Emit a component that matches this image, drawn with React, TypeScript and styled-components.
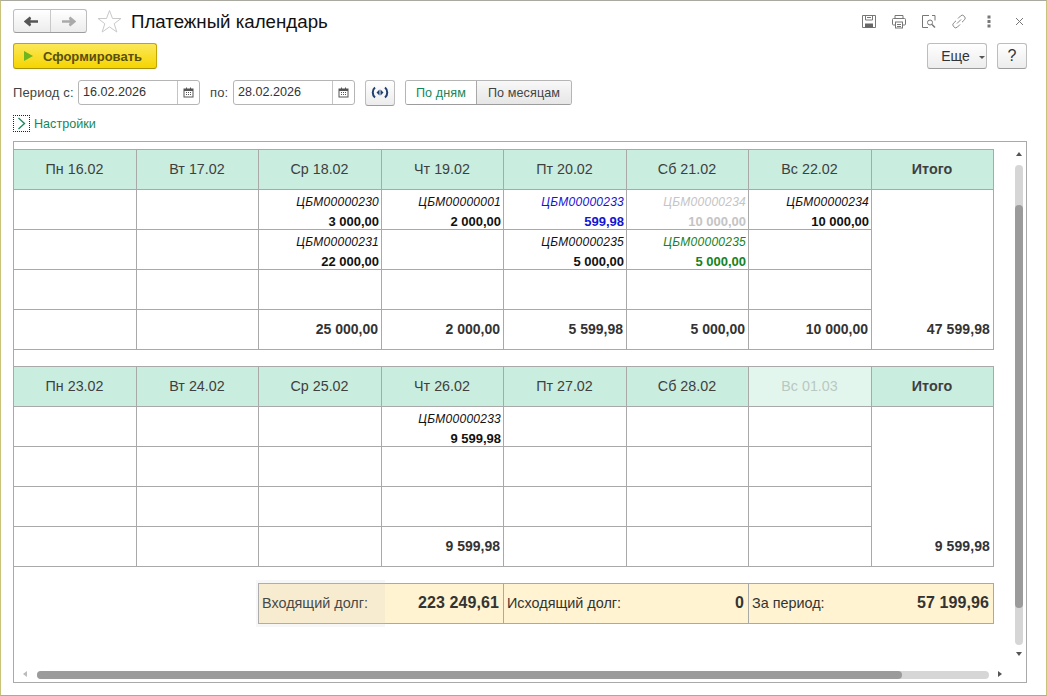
import { Fragment } from 'react';
import styled, { createGlobalStyle } from 'styled-components';

const GlobalStyle = createGlobalStyle`
    html, body {
        margin: 0;
        padding: 0;
        background: #fff;
    }
    body {
        font-family: "Liberation Sans", Arial, sans-serif;
        color: #333;
    }
`

const Window = styled.div`
    width: 1047px;
    height: 696px;
    box-sizing: border-box;
    border: 1px solid #c9c27a;
    border-top-color: #a9a9a0;
    border-bottom-color: #a9a9a0;
    padding: 8px 19px 12px 12px;
    display: flex;
    flex-direction: column;
    overflow: hidden;
`

const TitleRow = styled.div`
    display: flex;
    align-items: center;
    height: 24px;
`

const NavGroup = styled.div`
    display: flex;
    width: 74px;
    height: 24px;
    box-sizing: border-box;
    border: 1px solid #bdbdbd;
    border-bottom-color: #9c9c9c;
    border-radius: 3px;
    background: linear-gradient(#fff, #ececec);
`

const NavButton = styled.div<{ $last?: boolean }>`
    flex: 1;
    display: flex;
    align-items: center;
    justify-content: center;
    border-left: ${(p) => (p.$last ? '1px solid #c8c8c8' : 'none')};
`

const StarWrap = styled.div`
    margin-left: 10px;
    width: 26px;
    height: 24px;
`

const Title = styled.h1`
    margin: 1px 0 0 8px;
    font-size: 18.7px;
    font-weight: normal;
    color: #111;
    flex: 1;
`

const ToolIcons = styled.div`
    display: flex;
    align-items: center;
    margin-right: -7px;
`

const ToolIcon = styled.div`
    width: 30px;
    height: 20px;
    display: flex;
    align-items: center;
    justify-content: center;
`

const CommandRow = styled.div`
    display: flex;
    align-items: center;
    margin-top: 10px;
    height: 26px;
`

const GenerateButton = styled.div`
    width: 144px;
    height: 26px;
    box-sizing: border-box;
    display: flex;
    align-items: center;
    padding-left: 10px;
    gap: 10px;
    border: 1px solid #c4a600;
    border-bottom-color: #a89000;
    border-radius: 3px;
    background: linear-gradient(#fbe85a, #f5d500);
    font-size: 13px;
    font-weight: bold;
    color: #5a4f10;
`

const Spacer = styled.div`
    flex: 1;
`

const PlainButton = styled.div<{ $w: number; $big?: boolean; $pl?: number }>`
    width: ${(p) => p.$w}px;
    height: 26px;
    box-sizing: border-box;
    display: flex;
    align-items: center;
    justify-content: center;
    gap: 9px;
    margin-left: 10px;
    padding-left: ${(p) => p.$pl ?? 0}px;
    border: 1px solid #bdbdbd;
    border-bottom-color: #9c9c9c;
    border-radius: 3px;
    background: linear-gradient(#fff, #ececec);
    font-size: ${(p) => (p.$big ? 16 : 14)}px;
    color: #333;
`

const Caret = styled.span`
    width: 0;
    height: 0;
    margin-top: 2px;
    border-left: 3px solid transparent;
    border-right: 3px solid transparent;
    border-top: 3px solid #555;
`

const PeriodRow = styled.div`
    display: flex;
    align-items: center;
    margin-top: 11px;
    height: 25px;
    font-size: 13px;
    color: #444;
`

const PeriodLabel = styled.span<{ $w: number; $ml?: number }>`
    width: ${(p) => p.$w}px;
    margin-left: ${(p) => p.$ml ?? 0}px;
    letter-spacing: 0.15px;
`

const DateBox = styled.div`
    width: 122px;
    height: 25px;
    box-sizing: border-box;
    display: flex;
    border: 1px solid #b5b5b5;
    border-radius: 3px;
    background: #fff;
    font-size: 12.6px;
    color: #333;
`

const DateValue = styled.div`
    flex: 1;
    padding-left: 4px;
    line-height: 23px;
`

const DateIcon = styled.div`
    width: 21px;
    border-left: 1px solid #c4c4c4;
    display: flex;
    align-items: center;
    justify-content: center;
`

const SyncButton = styled.div`
    width: 30px;
    height: 26px;
    box-sizing: border-box;
    margin-left: 10px;
    display: flex;
    align-items: center;
    justify-content: center;
    border: 1px solid #bdbdbd;
    border-bottom-color: #9c9c9c;
    border-radius: 3px;
    background: linear-gradient(#fff, #ececec);
`

const Segmented = styled.div`
    display: flex;
    height: 25px;
    margin-left: 10px;
    box-sizing: border-box;
    border: 1px solid #b5b5b5;
    border-bottom-color: #9c9c9c;
    border-radius: 3px;
    font-size: 12.6px;
    overflow: hidden;
`

const Segment = styled.div<{ $active?: boolean }>`
    display: flex;
    align-items: center;
    justify-content: center;
    width: ${(p) => (p.$active ? 70 : 94)}px;
    letter-spacing: 0.1px;
    color: ${(p) => (p.$active ? '#14875a' : '#444')};
    background: ${(p) => (p.$active ? '#fff' : 'linear-gradient(#f8f8f8, #e6e6e6)')};
    border-left: ${(p) => (p.$active ? 'none' : '1px solid #a8a8a8')};
`

const SettingsRow = styled.div`
    display: flex;
    align-items: center;
    gap: 4px;
    margin-top: 10px;
    height: 17px;
    font-size: 12.6px;
    color: #14875a;
`

const SettingsToggle = styled.div`
    width: 17px;
    height: 17px;
    box-sizing: border-box;
    border: 1px dotted #222;
    display: flex;
    align-items: center;
    justify-content: center;
`

const Panel = styled.div`
    position: relative;
    margin-top: 9px;
    flex: 1;
    border: 1px solid #a9a9a9;
    padding: 7px 32px 0 0;
    min-height: 0;
`

const CalendarGrid = styled.div`
    display: grid;
    grid-template-columns: 123px 122px 123px 122px 123px 122px 123px 122px;
    grid-auto-rows: 40px;
    border-top: 1px solid #a9a9a9;
    margin-bottom: 16px;
    width: 980px;
`

const HeaderCell = styled.div<{ $total?: boolean; $faded?: boolean }>`
    display: flex;
    align-items: center;
    justify-content: center;
    box-sizing: border-box;
    padding: 0 1px 1px 0;
    border-right: 1px solid #a9a9a9;
    border-bottom: 1px solid #a9a9a9;
    background: ${(p) => (p.$faded ? '#e3f6ee' : '#c9eddf')};
    font-size: 14.3px;
    font-weight: ${(p) => (p.$total ? 'bold' : 'normal')};
    color: ${(p) => (p.$faded ? '#b9c8c1' : '#3f3f3f')};
`

const Cell = styled.div`
    box-sizing: border-box;
    border-right: 1px solid #a9a9a9;
    border-bottom: 1px solid #a9a9a9;
    padding: 3px 2px 0 0;
    text-align: right;
    font-size: 12px;
    line-height: 20px;
`

const DocNumber = styled.div<{ $color?: string }>`
    font-style: italic;
    height: 19px;
    line-height: 18px;
    letter-spacing: 0.25px;
    color: ${(p) => p.$color ?? '#111'};
`

const Amount = styled.div<{ $color?: string }>`
    font-size: 13px;
    font-weight: bold;
    height: 18px;
    line-height: 19px;
    color: ${(p) => p.$color ?? '#111'};
`

const DayTotal = styled.div`
    box-sizing: border-box;
    border-right: 1px solid #a9a9a9;
    border-bottom: 1px solid #a9a9a9;
    padding: 0 3px 12px 0;
    display: flex;
    align-items: flex-end;
    justify-content: flex-end;
    font-size: 14px;
    line-height: 16px;
    font-weight: bold;
    color: #333;
`

const GrandTotal = styled(DayTotal)`
    grid-row: span 4;
    letter-spacing: 0.1px;
`

const Summary = styled.div`
    display: grid;
    grid-template-columns: 245px 245px 244px;
    width: 736px;
    height: 41px;
    margin-left: 244px;
    box-sizing: border-box;
    border: 1px solid #a9a9a9;
    background: #fff3d1;
    position: relative;
`

const SummaryCell = styled.div<{ $last?: boolean }>`
    display: flex;
    align-items: center;
    justify-content: space-between;
    padding: 0 4px 1px 3px;
    border-right: ${(p) => (p.$last ? 'none' : '1px solid #a9a9a9')};
    font-size: 14.4px;
    color: #333;
`

const SummaryValue = styled.span`
    font-size: 16px;
    font-weight: bold;
    letter-spacing: 0.1px;
`

const HoverShade = styled.div`
    position: absolute;
    left: -3px;
    top: -4px;
    width: 129px;
    height: 47px;
    background: rgba(200, 200, 200, 0.14);
    pointer-events: none;
`

const ScrollV = styled.div`
    position: absolute;
    right: 3px;
    top: 23px;
    bottom: 37px;
    width: 8px;
    border-radius: 4px;
    background: #d6d6d6;
`

const ScrollVThumb = styled.div`
    position: absolute;
    left: 0;
    right: 0;
    top: 40px;
    height: 403px;
    border-radius: 4px;
    background: #9b9b9b;
`

const ScrollH = styled.div`
    position: absolute;
    left: 23px;
    width: 952px;
    bottom: 3px;
    height: 8px;
    border-radius: 4px;
    background: #d6d6d6;
`

const ScrollHThumb = styled.div`
    position: absolute;
    left: 0;
    top: 0;
    bottom: 0;
    width: 865px;
    border-radius: 4px;
    background: #9b9b9b;
`

const Arrow = styled.div<{ $dir: 'up' | 'down' | 'left' | 'right' }>`
    position: absolute;
    width: 0;
    height: 0;
    ${(p) => (p.$dir === 'up' || p.$dir === 'down'
        ? `
            right: 4px;
            border-left: 3px solid transparent;
            border-right: 3px solid transparent;
            ${p.$dir === 'up' ? 'top: 10px; border-bottom: 4px solid #555;' : 'bottom: 26px; border-top: 4px solid #555;'}
        `
        : `
            bottom: 5px;
            border-top: 3px solid transparent;
            border-bottom: 3px solid transparent;
            ${p.$dir === 'left' ? 'left: 9px; border-right: 4px solid #bbb;' : 'right: 24px; border-left: 4px solid #555;'}
        `)}
`

type TEntry = {
    doc: string;
    sum: string;
    color?: string;
}

type TWeek = {
    days: { title: string; faded?: boolean }[];
    rows: (TEntry | null)[][];
    totals: string[];
    total: string;
}

const BLUE = '#1414d2';
const GREY = '#c4c4c4';
const GREEN = '#14821e';

const weeks: TWeek[] = [
    {
        days: [
            { title: 'Пн 16.02' }, { title: 'Вт 17.02' }, { title: 'Ср 18.02' }, { title: 'Чт 19.02' },
            { title: 'Пт 20.02' }, { title: 'Сб 21.02' }, { title: 'Вс 22.02' },
        ],
        rows: [
            [
                null, null,
                { doc: 'ЦБМ00000230', sum: '3 000,00' },
                { doc: 'ЦБМ00000001', sum: '2 000,00' },
                { doc: 'ЦБМ00000233', sum: '599,98', color: BLUE },
                { doc: 'ЦБМ00000234', sum: '10 000,00', color: GREY },
                { doc: 'ЦБМ00000234', sum: '10 000,00' },
            ],
            [
                null, null,
                { doc: 'ЦБМ00000231', sum: '22 000,00' },
                null,
                { doc: 'ЦБМ00000235', sum: '5 000,00' },
                { doc: 'ЦБМ00000235', sum: '5 000,00', color: GREEN },
                null,
            ],
            [null, null, null, null, null, null, null],
        ],
        totals: ['', '', '25 000,00', '2 000,00', '5 599,98', '5 000,00', '10 000,00'],
        total: '47 599,98',
    },
    {
        days: [
            { title: 'Пн 23.02' }, { title: 'Вт 24.02' }, { title: 'Ср 25.02' }, { title: 'Чт 26.02' },
            { title: 'Пт 27.02' }, { title: 'Сб 28.02' }, { title: 'Вс 01.03', faded: true },
        ],
        rows: [
            [null, null, null, { doc: 'ЦБМ00000233', sum: '9 599,98' }, null, null, null],
            [null, null, null, null, null, null, null],
            [null, null, null, null, null, null, null],
        ],
        totals: ['', '', '', '9 599,98', '', '', ''],
        total: '9 599,98',
    },
];

const CalendarGlyph = () => (
    <svg width="11" height="11" viewBox="0 0 11 11">
        <rect x="1" y="2" width="9" height="8" fill="none" stroke="#555" />
        <rect x="1" y="2" width="9" height="2" fill="#555" />
        <rect x="3" y="0.5" width="1" height="2" fill="#555" />
        <rect x="7" y="0.5" width="1" height="2" fill="#555" />
        <path d="M3 5.5h1M5 5.5h1M7 5.5h1M3 7.5h1M5 7.5h1M7 7.5h1" stroke="#555" />
    </svg>
);

const WeekTable = ({ week }: { week: TWeek }) => (
    <CalendarGrid>
        {week.days.map((day) => (
            <HeaderCell key={day.title} $faded={day.faded}>{day.title}</HeaderCell>
        ))}
        <HeaderCell $total>Итого</HeaderCell>
        {week.rows.map((row, rowIndex) => (
            <Fragment key={rowIndex}>
                {row.map((entry, i) => (
                    <Cell key={i}>
                        {entry && (
                            <>
                                <DocNumber $color={entry.color}>{entry.doc}</DocNumber>
                                <Amount $color={entry.color}>{entry.sum}</Amount>
                            </>
                        )}
                    </Cell>
                ))}
                {rowIndex === 0 && <GrandTotal>{week.total}</GrandTotal>}
            </Fragment>
        ))}
        {week.totals.map((total, i) => (
            <DayTotal key={i}>{total}</DayTotal>
        ))}
    </CalendarGrid>
);

const App = () => {
    return (
        <>
            <GlobalStyle />
            <Window>
                <TitleRow>
                    <NavGroup>
                        <NavButton>
                            <svg width="15" height="11" viewBox="0 0 15 11">
                                <path d="M14 5.500H5M6.500 1.500 1.500 5.500l5 4" fill="#555" stroke="#555" strokeWidth="2.400" />
                            </svg>
                        </NavButton>
                        <NavButton $last>
                            <svg width="15" height="11" viewBox="0 0 15 11">
                                <path d="M1 5.500h9M8.500 1.500l5 4-5 4" fill="#aaa" stroke="#aaa" strokeWidth="2.400" />
                            </svg>
                        </NavButton>
                    </NavGroup>
                    <StarWrap>
                        <svg width="25" height="24" viewBox="0 0 25 24">
                            <path d="M12.500 1.500l3 8h8.500l-6.800 5.200 2.600 8.300-7.300-5.100-7.300 5.100 2.600-8.300L1 9.500h8.500z" fill="#fff" stroke="#c9c9c9" />
                        </svg>
                    </StarWrap>
                    <Title>Платежный календарь</Title>
                    <ToolIcons>
                        <ToolIcon>
                            <svg width="16" height="15" viewBox="0 0 16 15" fill="none" stroke="#777">
                                <path d="M1.500 1.500h13v12h-13z" />
                                <path d="M4.500 1.500v4.500h7v-4.500M6 3.500h4" />
                                <rect x="4" y="9.500" width="8" height="4" fill="#666" stroke="none" />
                            </svg>
                        </ToolIcon>
                        <ToolIcon>
                            <svg width="16" height="15" viewBox="0 0 16 15" fill="none" stroke="#777">
                                <path d="M4 4V1.500h8V4" />
                                <rect x="1.500" y="4.500" width="13" height="6.500" rx="1" />
                                <rect x="4.500" y="8" width="7" height="6" fill="#fff" />
                                <path d="M6 10.500h4M6 12.500h4" />
                            </svg>
                        </ToolIcon>
                        <ToolIcon>
                            <svg width="16" height="15" viewBox="0 0 16 15" fill="none" stroke="#777">
                                <path d="M8 1.500H1.500v12H7M11 1.500h3v5" />
                                <circle cx="9" cy="8.500" r="2.500" />
                                <path d="M11 10.500l3 3" strokeWidth="1.500" />
                            </svg>
                        </ToolIcon>
                        <ToolIcon>
                            <svg width="16" height="15" viewBox="0 0 16 15" fill="none" stroke="#888">
                                <path d="M7 4.500 9.500 2a2.400 2.400 0 0 1 3.500 0l.5.5a2.400 2.400 0 0 1 0 3.300L11 8.200" />
                                <path d="M9 10.500 6.500 13a2.400 2.400 0 0 1-3.500 0l-.5-.5a2.400 2.400 0 0 1 0-3.300L5 6.800" />
                                <path d="M6 9.500l4-4" />
                            </svg>
                        </ToolIcon>
                        <ToolIcon>
                            <svg width="4" height="13" viewBox="0 0 4 13" fill="#777">
                                <rect x="0.500" y="0.500" width="3" height="3" />
                                <rect x="0.500" y="5" width="3" height="3" />
                                <rect x="0.500" y="9.500" width="3" height="3" />
                            </svg>
                        </ToolIcon>
                        <ToolIcon>
                            <svg width="9" height="9" viewBox="0 0 9 9" stroke="#777">
                                <path d="M1 1l7 7M8 1 1 8" />
                            </svg>
                        </ToolIcon>
                    </ToolIcons>
                </TitleRow>
                <CommandRow>
                    <GenerateButton>
                        <svg width="9" height="10" viewBox="0 0 9 10">
                            <path d="M0 0l9 5-9 5z" fill="#6fb51e" />
                        </svg>
                        Сформировать
                    </GenerateButton>
                    <Spacer />
                    <PlainButton $w={60} $pl={12}>Еще <Caret /></PlainButton>
                    <PlainButton $w={30} $big>?</PlainButton>
                </CommandRow>
                <PeriodRow>
                    <PeriodLabel $w={65}>Период с:</PeriodLabel>
                    <DateBox>
                        <DateValue>16.02.2026</DateValue>
                        <DateIcon><CalendarGlyph /></DateIcon>
                    </DateBox>
                    <PeriodLabel $w={23} $ml={10}>по:</PeriodLabel>
                    <DateBox>
                        <DateValue>28.02.2026</DateValue>
                        <DateIcon><CalendarGlyph /></DateIcon>
                    </DateBox>
                    <SyncButton>
                        <svg width="18" height="13" viewBox="0 0 18 13" fill="none" stroke="#1f3f6e" strokeWidth="2">
                            <path d="M4 1.500C1 4 1 9 4 11.500M14 1.500c3 2.500 3 7.500 0 10" />
                            <path d="M8.500 3.500 5.500 6.500 8.500 9.500zM9.500 3.500l3 3-3 3z" fill="#1f3f6e" stroke="none" />
                        </svg>
                    </SyncButton>
                    <Segmented>
                        <Segment $active>По дням</Segment>
                        <Segment>По месяцам</Segment>
                    </Segmented>
                </PeriodRow>
                <SettingsRow>
                    <SettingsToggle>
                        <svg width="9" height="13" viewBox="0 0 9 13" fill="none" stroke="#14875a" strokeWidth="1.300">
                            <path d="M1.500 1 7.500 6.500 1.500 12" />
                        </svg>
                    </SettingsToggle>
                    Настройки
                </SettingsRow>
                <Panel>
                    {weeks.map((week) => (
                        <WeekTable key={week.total} week={week} />
                    ))}
                    <Summary>
                        <HoverShade />
                        <SummaryCell>Входящий долг:<SummaryValue>223 249,61</SummaryValue></SummaryCell>
                        <SummaryCell>Исходящий долг:<SummaryValue>0</SummaryValue></SummaryCell>
                        <SummaryCell $last>За период:<SummaryValue>57 199,96</SummaryValue></SummaryCell>
                    </Summary>
                    <Arrow $dir="up" />
                    <ScrollV><ScrollVThumb /></ScrollV>
                    <Arrow $dir="down" />
                    <Arrow $dir="left" />
                    <ScrollH><ScrollHThumb /></ScrollH>
                    <Arrow $dir="right" />
                </Panel>
            </Window>
        </>
    )
}

export default App;
